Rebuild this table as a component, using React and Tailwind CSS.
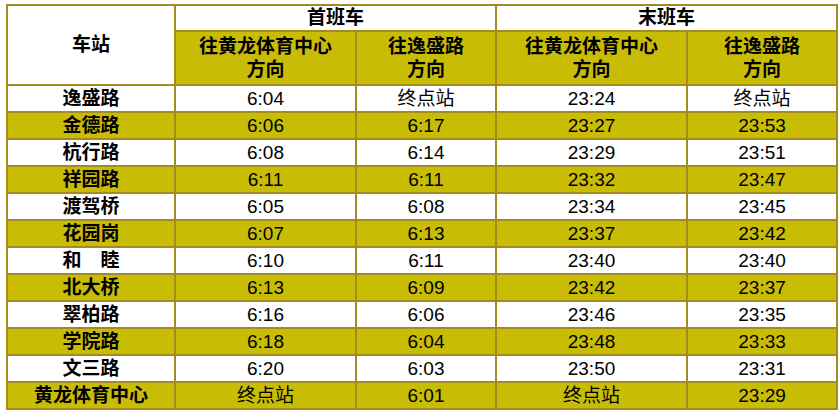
import React from 'react';

const rows = [
  ['逸盛路', '6:04', '终点站', '23:24', '终点站'],
  ['金德路', '6:06', '6:17', '23:27', '23:53'],
  ['杭行路', '6:08', '6:14', '23:29', '23:51'],
  ['祥园路', '6:11', '6:11', '23:32', '23:47'],
  ['渡驾桥', '6:05', '6:08', '23:34', '23:45'],
  ['花园岗', '6:07', '6:13', '23:37', '23:42'],
  ['和　睦', '6:10', '6:11', '23:40', '23:40'],
  ['北大桥', '6:13', '6:09', '23:42', '23:37'],
  ['翠柏路', '6:16', '6:06', '23:46', '23:35'],
  ['学院路', '6:18', '6:04', '23:48', '23:33'],
  ['文三路', '6:20', '6:03', '23:50', '23:31'],
  ['黄龙体育中心', '终点站', '6:01', '终点站', '23:29'],
];

const cell = 'border-2 border-[#a38b1f] p-0 text-center align-middle';

const App = () => {
  return (
    <div className="w-[840px] h-[420px] bg-white pt-[4px] pl-[6px] text-black text-[19px]"
      style={{ fontFamily: '"Liberation Sans", "Noto Sans CJK SC", sans-serif' }}>
      <table className="border-collapse table-fixed w-[830px]">
        <colgroup>
          <col className="w-[168px]" />
          <col className="w-[181px]" />
          <col className="w-[140px]" />
          <col className="w-[191px]" />
          <col className="w-[150px]" />
        </colgroup>
        <thead>
          <tr className="h-[26px]">
            <th rowSpan={2} className={`${cell} bg-white font-bold leading-[24px]`}>车站</th>
            <th colSpan={2} className={`${cell} bg-white font-bold leading-[24px]`}>首班车</th>
            <th colSpan={2} className={`${cell} bg-white font-bold leading-[24px]`}>末班车</th>
          </tr>
          <tr className="h-[54px]">
            <th className={`${cell} bg-[#c9bc05] font-bold leading-[23px]`}>往黄龙体育中心<br />方向</th>
            <th className={`${cell} bg-[#c9bc05] font-bold leading-[23px]`}>往逸盛路<br />方向</th>
            <th className={`${cell} bg-[#c9bc05] font-bold leading-[23px]`}>往黄龙体育中心<br />方向</th>
            <th className={`${cell} bg-[#c9bc05] font-bold leading-[23px]`}>往逸盛路<br />方向</th>
          </tr>
        </thead>
        <tbody>
          {rows.map((r, i) => (
            <tr key={r[0]} className={`h-[27px] ${i % 2 === 1 ? 'bg-[#c9bc05]' : 'bg-white'}`}>
              <td className={`${cell} font-bold leading-[23px]`}>{r[0]}</td>
              {r.slice(1).map((v, j) => (
                <td key={j} className={`${cell} font-normal leading-[23px]`}>{v}</td>
              ))}
            </tr>
          ))}
        </tbody>
      </table>
    </div>
  );
};

export default App;
